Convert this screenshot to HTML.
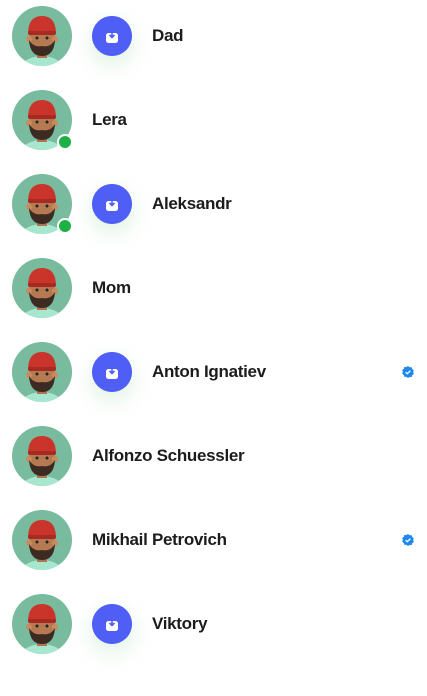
<!DOCTYPE html>
<html><head><style>
body{margin:0;width:427px;height:696px;background:#fff;font-family:"Liberation Sans",sans-serif;overflow:hidden}
.row{position:absolute;left:0;width:427px;height:84px}
.av{position:absolute;left:12px;top:6px;width:60px;height:60px;border-radius:50%;background:#78bb9e;overflow:hidden}
.dot{position:absolute;left:57px;top:50px;width:12px;height:12px;border-radius:50%;background:#1db045;border:2px solid #fff}
.ic{position:absolute;left:92px;top:16px;width:40px;height:40px;border-radius:50%;background:#4f5ef5;box-shadow:0 8px 22px rgba(140,210,150,.3)}
.nm{position:absolute;top:26px;font-size:17px;font-weight:bold;color:#1c1c1c;letter-spacing:-.3px}
.bd{position:absolute;left:402px;top:30px}
</style></head><body>
<svg width="0" height="0" style="position:absolute"><defs>
<g id="face">
<ellipse cx="30" cy="64" rx="22" ry="14" fill="#a7e6cf"/>
<rect x="25" y="40" width="10" height="12" fill="#b07450"/>
<ellipse cx="30" cy="32" rx="13" ry="15" fill="#b57a52"/>
<circle cx="17" cy="33" r="3" fill="#c98a5c"/>
<circle cx="43" cy="33" r="3" fill="#c98a5c"/>
<path d="M17 34 Q18 50 30 50 Q42 50 43 34 Q38 42 30 40 Q22 42 17 34Z" fill="#3b2b22"/>
<path d="M16 28 Q16 10 30 10 Q44 10 44 28 Q30 24 16 28Z" fill="#c9352b"/>
<rect x="16" y="25" width="28" height="4" rx="2" fill="#a82a22"/>
<circle cx="25" cy="32" r="1.5" fill="#222"/><circle cx="35" cy="32" r="1.5" fill="#222"/>
</g>
<g id="ico"><circle cx="20" cy="20" r="20" fill="#4f5ef5"/><rect x="14" y="17" width="12" height="10" rx="2.5" fill="#fff"/><path d="M20 14v7M17.5 19l2.5 2.5 2.5-2.5" stroke="#4f5ef5" stroke-width="1.6" fill="none"/></g>
<g id="badge"><path d="M6 0l1.6 1.2 2-.1.6 1.9 1.6 1.2-.6 1.9.6 1.9-1.6 1.2-.6 1.9-2-.1L6 12l-1.6-1.2-2 .1-.6-1.9L.2 7.8.8 5.9.2 4 1.8 2.8l.6-1.9 2 .1z" fill="#1e88f0"/><path d="M3.6 6.2l1.6 1.5 3.2-3" stroke="#fff" stroke-width="1.3" fill="none"/></g>
</defs></svg>

<div class="row" style="top:0"><div class="av"><svg width="60" height="60"><use href="#face"/></svg></div><svg class="ic" width="40" height="40"><use href="#ico"/></svg><div class="nm" style="left:152px">Dad</div></div>
<div class="row" style="top:84px"><div class="av"><svg width="60" height="60"><use href="#face"/></svg></div><div class="dot"></div><div class="nm" style="left:92px">Lera</div></div>
<div class="row" style="top:168px"><div class="av"><svg width="60" height="60"><use href="#face"/></svg></div><div class="dot"></div><svg class="ic" width="40" height="40"><use href="#ico"/></svg><div class="nm" style="left:152px">Aleksandr</div></div>
<div class="row" style="top:252px"><div class="av"><svg width="60" height="60"><use href="#face"/></svg></div><div class="nm" style="left:92px">Mom</div></div>
<div class="row" style="top:336px"><div class="av"><svg width="60" height="60"><use href="#face"/></svg></div><svg class="ic" width="40" height="40"><use href="#ico"/></svg><div class="nm" style="left:152px">Anton Ignatiev</div><svg class="bd" width="12" height="12"><use href="#badge"/></svg></div>
<div class="row" style="top:420px"><div class="av"><svg width="60" height="60"><use href="#face"/></svg></div><div class="nm" style="left:92px">Alfonzo Schuessler</div></div>
<div class="row" style="top:504px"><div class="av"><svg width="60" height="60"><use href="#face"/></svg></div><div class="nm" style="left:92px">Mikhail Petrovich</div><svg class="bd" width="12" height="12"><use href="#badge"/></svg></div>
<div class="row" style="top:588px"><div class="av"><svg width="60" height="60"><use href="#face"/></svg></div><svg class="ic" width="40" height="40"><use href="#ico"/></svg><div class="nm" style="left:152px">Viktory</div></div>
</body></html>
